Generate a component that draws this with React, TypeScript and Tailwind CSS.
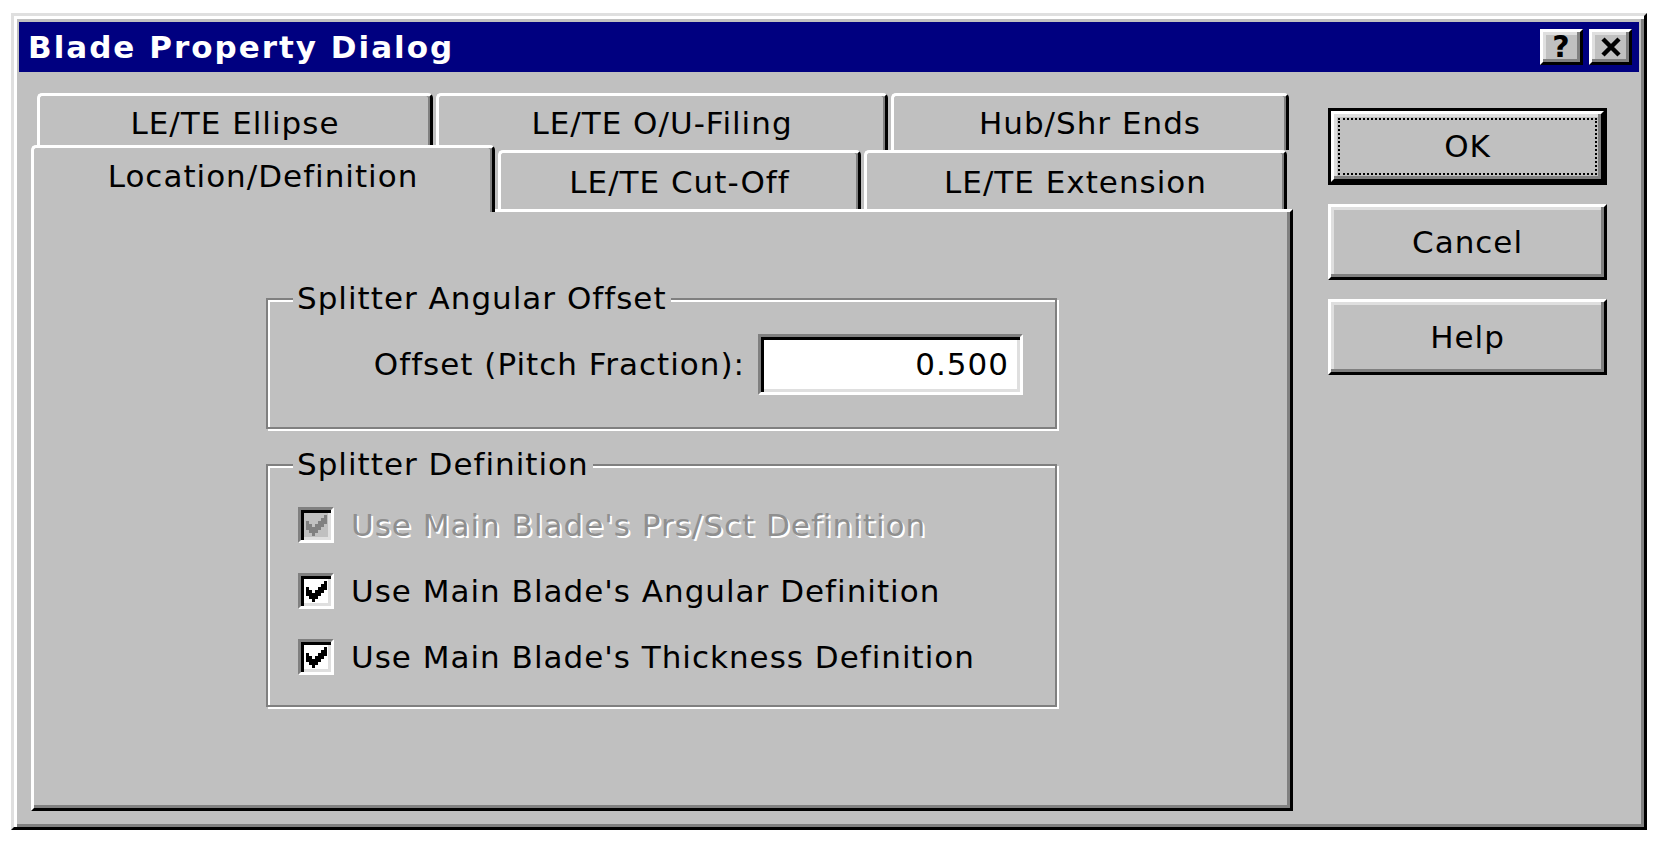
const raised =
  "border-[3px] border-t-white border-l-white border-r-black border-b-black shadow-[inset_-3px_-3px_0_#808080,inset_3px_3px_0_#dfdfdf]";
const sunken =
  "border-[3px] border-t-[#808080] border-l-[#808080] border-r-white border-b-white shadow-[inset_3px_3px_0_#000,inset_-3px_-3px_0_#dfdfdf]";

function Check({ color }: { color: string }) {
  // 7x7 win95 check bitmap
  const rows = ["......X", ".....XX", "X...XXX", "XX.XXX.", "XXXXX..", ".XXX...", "..X...."];
  return (
    <svg width="21" height="21" viewBox="0 0 7 7" shapeRendering="crispEdges">
      {rows.map((r, y) =>
        r.split("").map((c, x) =>
          c === "X" ? <rect key={`${x}-${y}`} x={x} y={y} width="1" height="1" fill={color} /> : null
        )
      )}
    </svg>
  );
}

function CheckRow({ label, disabled }: { label: string; disabled?: boolean }) {
  return (
    <div className="flex h-[36px] items-center gap-[17px]">
      <div
        className={`flex h-[36px] w-[36px] items-center justify-center ${sunken} ${
          disabled ? "bg-[#c0c0c0]" : "bg-white"
        }`}
      >
        <Check color={disabled ? "#808080" : "#000"} />
      </div>
      <span className={disabled ? "text-[#8f8f8f] [text-shadow:2px_2px_0_#fff]" : ""}>{label}</span>
    </div>
  );
}

function Tab({ label, w, row }: { label: string; w: string; row: 1 | 2 }) {
  return (
    <div
      className={`flex ${w} ${
        row === 1 ? "h-[57px]" : "h-[59px] pt-[2px]"
      } items-center justify-center rounded-t-[5px] border-t-[3px] border-l-[3px] border-r-[3px] border-t-white border-l-white border-r-black shadow-[inset_-2px_0_0_#808080]`}
    >
      {label}
    </div>
  );
}

function Group({ title, children, className }: { title: string; children: React.ReactNode; className: string }) {
  return (
    <div
      className={`ml-[232px] w-[791px] border-2 border-[#808080] shadow-[inset_2px_2px_0_#fff,2px_2px_0_#fff] ${className}`}
    >
      <div className="-mt-[20px] ml-[25px] w-fit bg-[#c0c0c0] px-[4px] leading-[37px]">{title}</div>
      {children}
    </div>
  );
}

export default function App() {
  return (
    <div className="min-h-screen bg-white pl-[11px] pt-[13px] font-['DejaVu_Sans',sans-serif] text-[31px] tracking-[1px] text-black">
      <div className="flex h-[817px] w-[1636px] flex-col border-[3px] border-t-[#dfdfdf] border-l-[#dfdfdf] border-r-black border-b-black bg-[#c0c0c0] px-[5px] pt-[6px] shadow-[inset_3px_3px_0_#fff,inset_-3px_-3px_0_#808080]">
        {/* title bar */}
        <div className="flex h-[50px] items-center bg-[#000080] pl-[9px] pr-[7px]">
          <span className="font-bold tracking-[2px] text-white">Blade Property Dialog</span>
          <div className="ml-auto flex gap-[6px]">
            <div className={`flex h-[36px] w-[43px] items-center justify-center bg-[#c0c0c0] text-[30px] font-bold leading-none ${raised}`}>
              ?
            </div>
            <div className={`flex h-[36px] w-[43px] items-center justify-center bg-[#c0c0c0] ${raised}`}>
              <svg width="22" height="20" viewBox="0 0 22 20">
                <path d="M3 2 L19 18 M19 2 L3 18" stroke="#000" strokeWidth="4.5" />
              </svg>
            </div>
          </div>
        </div>

        <div className="flex pl-[12px] pt-[21px]">
          {/* tab control */}
          <div className="flex w-[1262px] flex-col">
            <div className="flex gap-[3px] pl-[6px]">
              <Tab label="LE/TE Ellipse" w="w-[396px]" row={1} />
              <Tab label="LE/TE O/U-Filing" w="w-[452px]" row={1} />
              <Tab label="Hub/Shr Ends" w="w-[398px]" row={1} />
            </div>
            <div className="flex h-[59px] items-end gap-[3px]">
              <div className="relative z-10 -mb-[3px] flex h-[67px] w-[464px] items-start justify-center rounded-t-[5px] border-t-[3px] border-l-[3px] border-r-[3px] border-t-white border-l-white border-r-black bg-[#c0c0c0] pt-[5px] shadow-[inset_-2px_0_0_#808080]">
                Location/Definition
              </div>
              <Tab label="LE/TE Cut-Off" w="w-[363px]" row={2} />
              <Tab label="LE/TE Extension" w="w-[423px]" row={2} />
            </div>
            <div className="h-[602px] border-[3px] border-t-white border-l-white border-r-black border-b-black pt-[86px] shadow-[inset_-3px_-3px_0_#808080]">
              <Group title="Splitter Angular Offset" className="pb-[32px]">
                <div className="mt-[17px] flex items-center justify-end gap-[13px] pr-[32px]">
                  <span>Offset (Pitch Fraction):</span>
                  <div className={`flex h-[61px] w-[265px] items-center justify-end bg-white pr-[11px] ${sunken}`}>0.500</div>
                </div>
              </Group>
              <Group title="Splitter Definition" className="mt-[35px] pb-[30px]">
                <div className="mt-[24px] flex flex-col gap-[30px] pl-[30px]">
                  <CheckRow label="Use Main Blade's Prs/Sct Definition" disabled />
                  <CheckRow label="Use Main Blade's Angular Definition" />
                  <CheckRow label="Use Main Blade's Thickness Definition" />
                </div>
              </Group>
            </div>
          </div>

          {/* buttons */}
          <div className="ml-[35px] flex w-[279px] flex-col gap-[19px] pt-[15px]">
            <div className="h-[77px] border-[3px] border-black">
              <div className={`h-full p-[4px] ${raised}`}>
                <div className="flex h-full items-center justify-center border-2 border-dotted border-black">OK</div>
              </div>
            </div>
            <div className={`flex h-[76px] items-center justify-center ${raised}`}>Cancel</div>
            <div className={`flex h-[76px] items-center justify-center ${raised}`}>Help</div>
          </div>
        </div>
      </div>
    </div>
  );
}
